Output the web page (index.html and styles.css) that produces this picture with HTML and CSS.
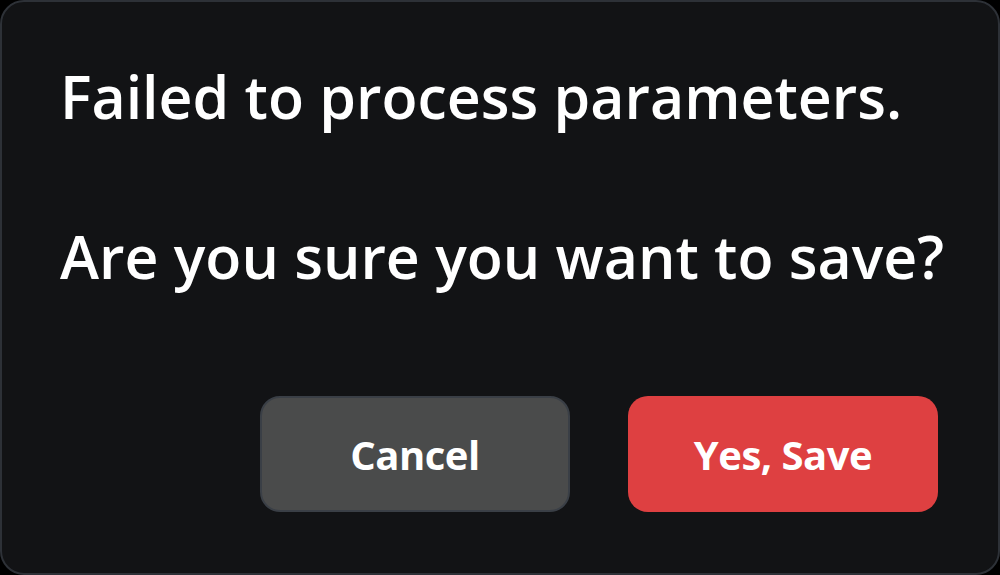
FILE: index.html
```html
<!DOCTYPE html>
<html>
<head>
<meta charset="utf-8">
<link rel="stylesheet" href="styles.css">
</head>
<body>
<div class="dialog">
  <div class="message">
    <p class="line">Failed to process parameters.</p>
    <p class="line">Are you sure you want to save?</p>
  </div>
  <div class="actions">
    <button class="btn btn-cancel">Cancel</button>
    <button class="btn btn-save">Yes, Save</button>
  </div>
</div>
</body>
</html>
```
FILE: styles.css
```css
html, body {
  margin: 0;
  padding: 0;
  background: #000;
}
.dialog {
  box-sizing: border-box;
  width: 1000px;
  height: 575px;
  background: #121315;
  border: 2px solid #2d3137;
  border-radius: 24px;
  padding: 58px 60px 61px 58px;
  display: flex;
  flex-direction: column;
  font-family: "Open Sans", sans-serif;
  color: #fff;
}
.message {
  display: flex;
  flex-direction: column;
  gap: 88px;
}
.line {
  margin: 0;
  font-size: 59px;
  font-weight: 600;
  line-height: 72px;
  letter-spacing: 0;
  white-space: nowrap;
}
.actions {
  margin-top: auto;
  display: flex;
  justify-content: flex-end;
  gap: 58px;
}
.btn {
  box-sizing: border-box;
  width: 310px;
  height: 116px;
  border-radius: 20px;
  font-family: "Open Sans", sans-serif;
  font-size: 40px;
  font-weight: 700;
  color: #fff;
  letter-spacing: -0.5px;
}
.btn-cancel {
  background: #4a4b4b;
  border: 2px solid #3a3f46;
}
.btn-save {
  background: #de4041;
  border: none;
}
```
